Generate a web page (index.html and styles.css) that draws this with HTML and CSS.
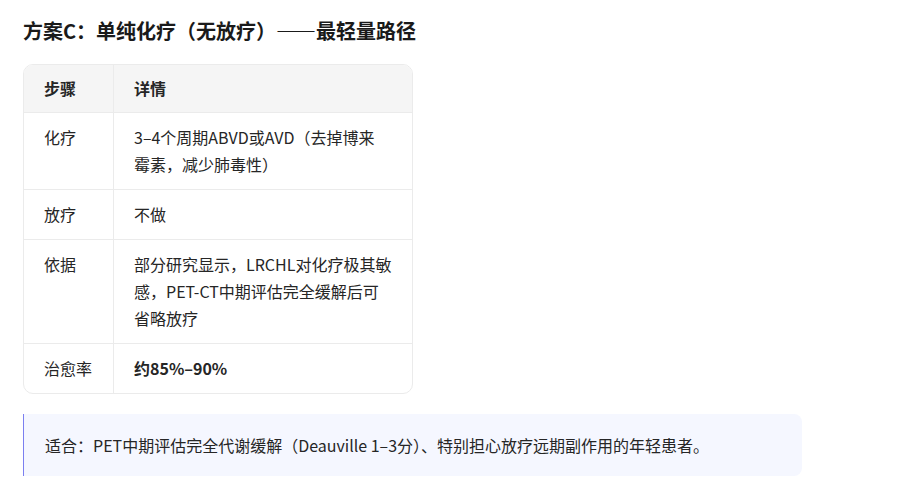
FILE: index.html
```html
<!DOCTYPE html>
<html lang="zh-CN">
<head>
    <meta charset="UTF-8">
    <meta name="viewport" content="width=device-width, initial-scale=1.0">
    <title>方案C</title>
    <link rel="stylesheet" href="styles.css">
</head>
<body>
    <div class="content">
        <h3 class="title">方案C：单纯化疗（无放疗）——最轻量路径</h3>

        <div class="table-wrap">
            <table class="plan">
                <thead>
                    <tr>
                        <th class="step">步骤</th>
                        <th>详情</th>
                    </tr>
                </thead>
                <tbody>
                    <tr>
                        <td class="step">化疗</td>
                        <td>3–4个周期ABVD或AVD（去掉博来<span class="word">霉素</span>，减少肺毒性）</td>
                    </tr>
                    <tr>
                        <td class="step">放疗</td>
                        <td>不做</td>
                    </tr>
                    <tr>
                        <td class="step">依据</td>
                        <td>部分研究显示，LRCHL对化疗极其敏感，PET-CT中期评估完全缓解后可省略放疗</td>
                    </tr>
                    <tr>
                        <td class="step">治愈率</td>
                        <td><b>约85%–90%</b></td>
                    </tr>
                </tbody>
            </table>
        </div>

        <div class="note">
            适合：PET中期评估完全代谢缓解（Deauville 1–3分）、特别担心放疗远期副作用的年轻患者。
        </div>
    </div>
</body>
</html>
```

FILE: styles.css
```css
body{
    margin:0;
    font-family:"Noto Sans CJK SC","Noto Sans",sans-serif;
    color:#262626;
    background:#fff;
}
.content{
    padding:15px 23px;
    width:779px;
}
.title{
    margin:0 0 17px;
    font-size:20px;
    line-height:32px;
    font-weight:700;
    color:#1a1a1a;
}
.table-wrap{
    width:388px;
    border:1px solid #ebebeb;
    border-radius:10px;
    overflow:hidden;
}
.plan{
    width:100%;
    border-collapse:collapse;
    font-size:16px;
    line-height:27px;
}
.plan th,
.plan td{
    padding:11px 20px;
    text-align:left;
    vertical-align:top;
    border-bottom:1px solid #ebebeb;
}
.plan th{
    padding:10px 20px;
    background:#f5f5f5;
    font-weight:700;
}
.plan .step{
    width:49px;
    border-right:1px solid #ebebeb;
}
.plan tbody tr:last-child td{
    border-bottom:none;
}
.word{
    white-space:nowrap;
}
.note{
    margin-top:20px;
    padding:18px 21px 17px;
    background:#f5f7ff;
    border-left:1px solid #7b7ff0;
    border-radius:0 8px 8px 0;
    font-size:16px;
    line-height:27px;
}
```
